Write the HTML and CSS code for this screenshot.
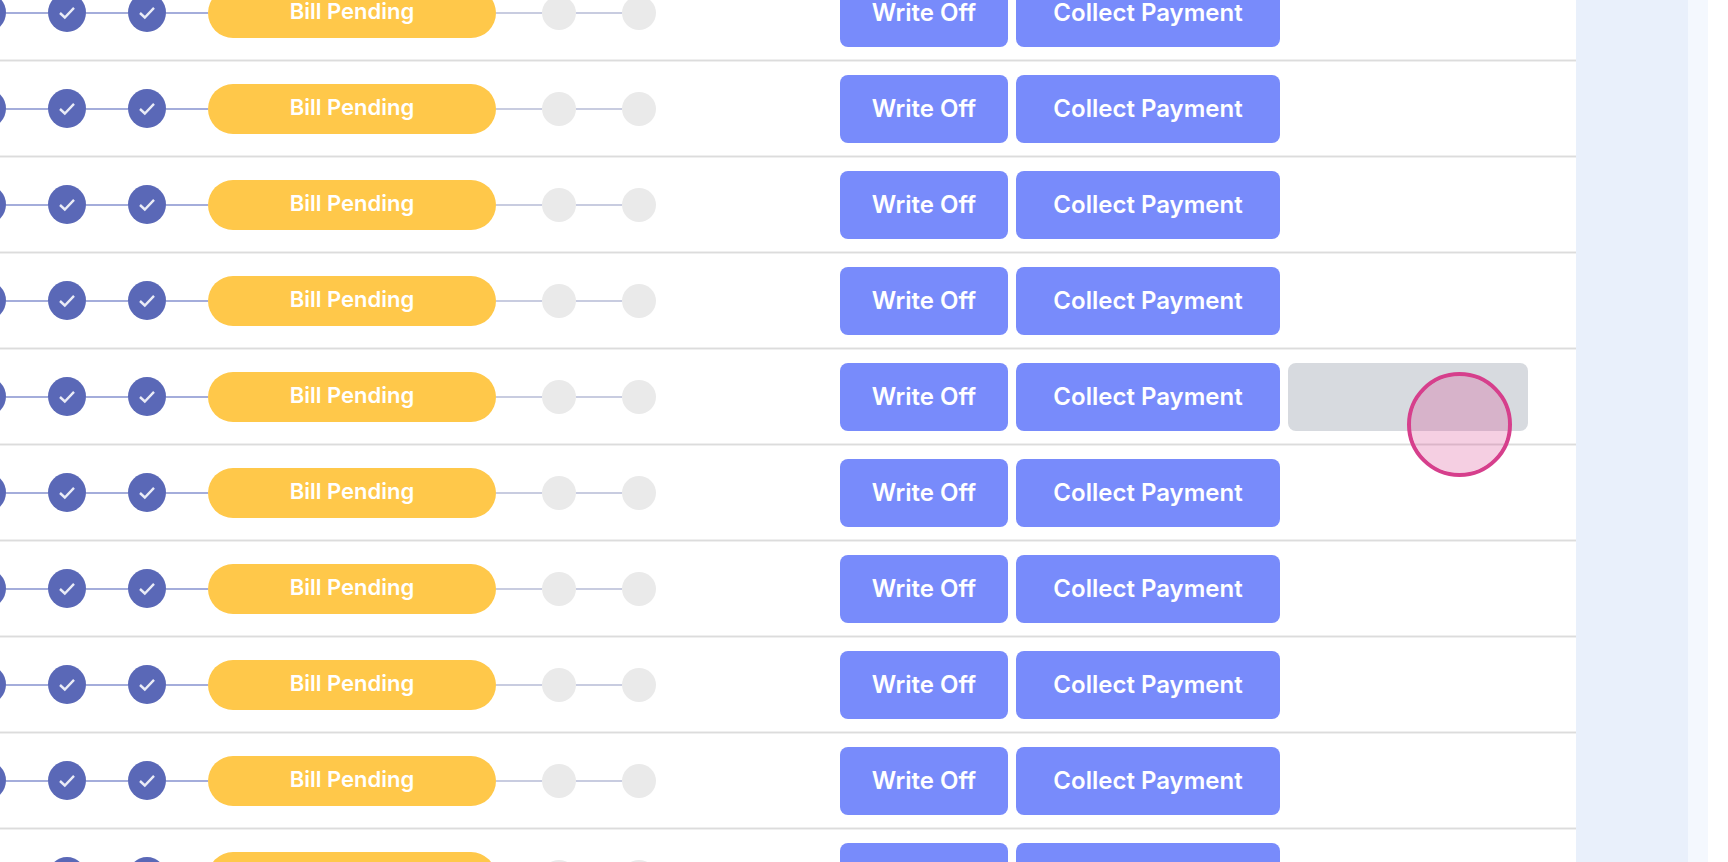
FILE: index.html
```
<!DOCTYPE html>
<html lang="en">
<head>
	<meta charset="utf-8">
	<title>Billing</title>
	<link rel="stylesheet" href="styles.css">
	<script type="text/javascript">
		const ROWS = 10;
		const ACTIVE_ROW = 4;

		function init() {
			let body = document.querySelector('.bills tbody');
			let row = document.querySelector('#bill-row');
			let extra = document.querySelector('#extra-action');

			for (let i = 0; i < ROWS; i++) {
				let item = row.content.cloneNode(true);
				if (i === ACTIVE_ROW) {
					item.querySelector('.actions').append(extra.content.cloneNode(true));
				}
				body.append(item);
			}
		}
	</script>
</head>
<body onload="init()">

<svg class="sprite" aria-hidden="true">
	<symbol id="check" viewBox="0 0 38 39">
		<path d="M12 20L16.8 24.5L26 14.8" fill="none" stroke="#e9ebf6" stroke-width="2.4" />
	</symbol>
</svg>

<div class="page">
	<div class="panel">
		<div class="content">
			<table class="bills">
				<tbody></tbody>
			</table>
		</div>
	</div>
</div>

<template id="bill-row">
	<tr>
		<td class="progress-cell">
			<div class="progress">
				<svg class="step done"><use href="#check" /></svg>
				<span class="line done"></span>
				<svg class="step done"><use href="#check" /></svg>
				<span class="line done"></span>
				<svg class="step done"><use href="#check" /></svg>
				<span class="line done"></span>
				<span class="status">Bill Pending</span>
				<span class="line"></span>
				<span class="step"></span>
				<span class="line"></span>
				<span class="step"></span>
			</div>
		</td>
		<td>
			<div class="actions">
				<button type="button">Write Off</button>
				<button type="button">Collect Payment</button>
			</div>
		</td>
	</tr>
</template>

<template id="extra-action">
	<div class="extra">
		<button type="button" class="muted" aria-label="More"></button>
		<span class="pointer"></span>
	</div>
</template>

</body>
</html>
```
FILE: styles.css
```
* {
	box-sizing: border-box;
}
body {
	margin: 0;
	height: 100vh;
	overflow: hidden;
	background: #fff;
	font-family: Inter, "Open Sans", sans-serif;
}
.sprite {
	display: none;
}
.page {
	height: 100%;
	padding-right: 20px;
}
.panel {
	height: 100%;
	padding-right: 20px;
	background: #f4f8fe;
}
.content {
	height: 100%;
	padding-right: 112px;
	overflow: hidden;
	background: #e9f0fb;
}

/* the list is scrolled a little down and to the right */
.bills {
	width: calc(100% + 32px);
	margin: -35px 0 0 -32px;
	border-spacing: 0;
	background: #fff;
}
.bills td {
	height: 96px;
	padding: 0;
	border-bottom: 1px solid #dcdcdc;
	box-shadow: 0 1px #efefef, inset 0 -1px #efefef;
	vertical-align: middle;
}
.bills .progress-cell {
	width: 872px;
}
.progress {
	display: flex;
	align-items: center;
}
.step {
	flex: none;
	width: 34px;
	height: 34px;
	border-radius: 50%;
	background: #eaeaea;
}
.step.done {
	width: 38px;
	height: 39px;
	background: #5a68b7;
}
.line {
	flex: none;
	width: 46px;
	height: 2px;
	background: #c8cce0;
}
.line.done {
	width: 42px;
	background: #a4addb;
}
.status {
	flex: none;
	width: 288px;
	height: 50px;
	padding-bottom: 4px;
	border-radius: 25px;
	background: #ffc84a;
	color: #fff;
	font-size: 22px;
	font-weight: 600;
	line-height: 46px;
	text-align: center;
}
.actions {
	display: grid;
	grid-template-columns: 168px 264px 240px;
	gap: 8px;
}
.actions button {
	height: 68px;
	padding: 0;
	border: 0;
	border-radius: 8px;
	background: #788bfb;
	color: #fff;
	font: 600 24px Inter, "Open Sans", sans-serif;
	cursor: pointer;
}
.extra {
	position: relative;
}
.actions .muted {
	display: block;
	width: 100%;
	background: #d7dadf;
}
.pointer {
	position: absolute;
	z-index: 1;
	top: 9px;
	left: 119px;
	width: 105px;
	height: 105px;
	border: 4px solid #d63f8c;
	border-radius: 50%;
	background: rgba(214, 63, 140, 0.25);
	background-clip: padding-box;
}
```
